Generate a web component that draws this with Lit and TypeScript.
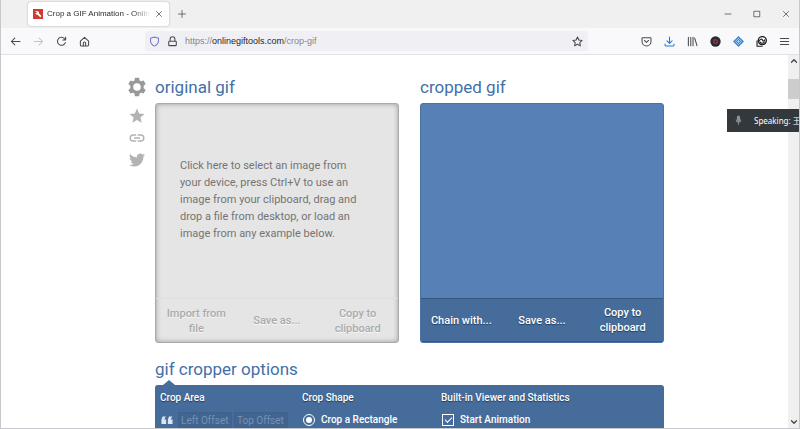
import { LitElement, html, css, svg } from "lit";
import { customElement, property } from "lit/decorators.js";

const stroke = (body: unknown, cls = "") => html`<svg class="ic ${cls}" viewBox="0 0 16 16" fill="none" stroke="currentColor" stroke-width="1.5" stroke-linecap="round" stroke-linejoin="round" aria-hidden="true">${body}</svg>`;
const solid = (body: unknown, cls = "") => html`<svg class="ic ${cls}" viewBox="0 0 24 24" fill="currentColor" aria-hidden="true">${body}</svg>`;

const icons = {
  back: stroke(svg`<path d="M14.5 8H2M7 3L2 8l5 5"/>`),
  forward: stroke(svg`<path d="M1.500 8H14M9 3l5 5-5 5"/>`),
  reload: stroke(svg`<path d="M13.500 9.500a5.800 5.800 0 1 1-1.200-5.600l1.500 1.600M14 1.500v4.200H9.800"/>`),
  home: stroke(svg`<path d="M2 7.500L8 2l6 5.500V13a1.500 1.500 0 0 1-1.500 1.500h-9A1.500 1.500 0 0 1 2 13zM6.300 14v-3.500a1.700 1.700 0 0 1 3.400 0V14"/>`),
  shield: stroke(svg`<path d="M8 1.300l5.800 1.900v3.300c0 4-2.300 6.600-5.800 8.200-3.500-1.600-5.800-4.200-5.800-8.200V3.200z"/>`),
  lock: stroke(svg`<path d="M4.500 7V4.500a3.500 3.500 0 0 1 7 0V7M3.500 7.500h9a1 1 0 0 1 1 1V13a1 1 0 0 1-1 1h-9a1 1 0 0 1-1-1V8.500a1 1 0 0 1 1-1z"/>`),
  star: stroke(svg`<path d="M8 1.500l2 4.300 4.700.6-3.400 3.200.9 4.700L8 12l-4.200 2.300.9-4.700L1.300 6.400 6 5.800z"/>`),
  pocket: stroke(svg`<path d="M2.500 2.500h11a1 1 0 0 1 1 1V8a6.500 6.500 0 0 1-13 0V3.500a1 1 0 0 1 1-1zM5 6.500L8 9.300l3-2.800"/>`),
  download: stroke(svg`<path d="M8 1.500v9M4.200 7L8 10.700 11.800 7M1.500 11.500V13A1.500 1.500 0 0 0 3 14.500h10a1.500 1.500 0 0 0 1.500-1.500v-1.500"/>`),
  library: stroke(svg`<path d="M2 2v12M5.500 2v12M8.800 2v12M11.200 3l3.300 11"/>`),
  menu: stroke(svg`<path d="M2 3.500h12M2 8h12M2 12.500h12"/>`),
  close: stroke(svg`<path d="M3 3l10 10M13 3L3 13"/>`),
  plus: stroke(svg`<path d="M8 1v14M1 8h14"/>`),
  min: stroke(svg`<path d="M2 8h12"/>`),
  max: stroke(svg`<path d="M2.500 2.500h11v11h-11z"/>`),
  up: stroke(svg`<path d="M3 10.500L8 5.500l5 5" stroke-width="2.500"/>`),
  down: stroke(svg`<path d="M3 5.500l5 5 5-5" stroke-width="2.500"/>`),
  record: html`<svg class="ic" viewBox="0 0 16 16" aria-hidden="true"><circle cx="8" cy="8" r="7.500" fill="#2c2830"/><circle cx="8" cy="8" r="4" fill="#7c3348"/><circle cx="8" cy="8" r="1.500" fill="#42262f"/></svg>`,
  diamond: html`<svg class="ic" viewBox="0 0 16 16" aria-hidden="true"><path d="M8 0l8 8-8 8-8-8z" fill="#3f87cf"/><path d="M8 3.500L12.500 8 8 12.500 3.500 8zM8 6v4M6 8h4" fill="none" stroke="#d3e6f7" stroke-width="1"/></svg>`,
  chat: html`<svg class="ic" viewBox="0 0 16 16" aria-hidden="true"><circle cx="9.200" cy="6.700" r="5.800" fill="#fff" stroke="#1c1b1f" stroke-width="2"/><path d="M1.500 6.500v8.300h8" fill="none" stroke="#1c1b1f" stroke-width="1.600"/><path d="M5 7.500c0-3 4-4 4.500-1.500s3 1 3.500-1M5.500 8.500c1.500 3 6 2.500 7-.5" fill="none" stroke="#1c1b1f" stroke-width="1.600"/></svg>`,
  tool: html`<svg class="ic favicon" viewBox="0 0 20 20" aria-hidden="true"><path d="M0 0h20v20H0z" fill="#cf3a33"/><path d="M4 4h4l4 2v3l5 5-2.500 2.500-5-5H7L4 8l3 .5L8 7z" fill="#fff"/></svg>`,
  gear: solid(svg`<path fill-rule="evenodd" d="M9.500 1h5l.6 3.100 1.800 1.100 3-1.100 2.500 4.300-2.400 2.100v2.900l2.400 2.100-2.500 4.400-3-1.100-1.800 1.100-.6 3.100h-5l-.6-3.100-1.800-1.100-3 1.100-2.500-4.400L4 13.400v-2.900L1.600 8.400l2.500-4.300 3 1.100 1.800-1.100zM12 7.500a4.500 4.500 0 1 0 0 9 4.500 4.500 0 0 0 0-9z"/>`, "gear"),
  favourite: solid(svg`<path d="M12 17.300L18.200 21l-1.600-7L22 9.200l-7.200-.6L12 2 9.200 8.600 2 9.200 7.500 14l-1.700 7z"/>`, "side"),
  link: solid(svg`<path d="M3.900 12a3.100 3.100 0 0 1 3.100-3.100h4V7H7a5 5 0 0 0 0 10h4v-1.900H7A3.100 3.100 0 0 1 3.900 12zM8 13h8v-2H8zm9-6h-4v1.900h4a3.100 3.100 0 0 1 0 6.200h-4V17h4a5 5 0 0 0 0-10z"/>`, "side"),
  twitter: solid(svg`<path d="M23.950 4.570a10 10 0 0 1-2.820.78 4.960 4.960 0 0 0 2.160-2.720c-.95.550-2 .950-3.130 1.180a4.920 4.920 0 0 0-8.380 4.480C7.690 8.090 4.070 6.130 1.640 3.160a4.820 4.820 0 0 0-.67 2.480c0 1.710.87 3.210 2.190 4.100a4.900 4.900 0 0 1-2.230-.62v.06a4.920 4.920 0 0 0 3.950 4.830 5 5 0 0 1-2.210.08 4.940 4.940 0 0 0 4.600 3.420A9.870 9.870 0 0 1 0 19.540a13.990 13.990 0 0 0 7.550 2.210c9.050 0 14-7.500 14-13.980 0-.210 0-.420-.02-.630a9.940 9.940 0 0 0 2.460-2.550z"/>`, "bird"),
  quote: solid(svg`<path d="M3 18h5.500l2-5V5h-8v8h3.300zm11 0h5.500l2-5V5h-8v8h3.300z" transform="rotate(180 12 12)"/>`, "quote"),
  mic: solid(svg`<path d="M12 14a3.500 3.500 0 0 0 3.500-3.500v-6a3.500 3.500 0 0 0-7 0v6A3.500 3.500 0 0 0 12 14zm6.500-4h-2a4.500 4.500 0 0 1-9 0h-2a6.500 6.500 0 0 0 5.500 6.400V21h2v-4.600a6.500 6.500 0 0 0 5.500-6.400z"/>`, "mic"),
};

const reset = css`
  :host, *, *::before { box-sizing: border-box; }
  button { border: 0; padding: 0; background: none; font: inherit; color: inherit; display: flex; align-items: center; justify-content: center; }
  .ic { display: block; width: 12px; height: 12px; flex: none; }
`;

@customElement("browser-chrome")
class BrowserChrome extends LitElement {
  static styles = [reset, css`
    :host { display: block; flex: none; font: 9px/16px "Liberation Sans", sans-serif; color: #48474e; }
    .tabs { display: flex; align-items: center; height: 28px; padding: 0 9px 0 27px; background: #f0f0f0; }
    .tab { display: flex; align-items: center; gap: 4px; width: 141px; height: 24px; padding: 0 6px 0 5px; background: #fff; border-radius: 3px; box-shadow: 0 0 2px #a9a9ae; }
    .tab .favicon { width: 10px; height: 10px; }
    .title { flex: 1; font-size: 8px; overflow: hidden; white-space: nowrap; color: #2c2b31; mask-image: linear-gradient(90deg, #000 82%, transparent); }
    .tab .close .ic, .add .ic, .window .ic { width: 8px; height: 8px; }
    .add { margin-left: 9px; }
    .window { display: flex; gap: 21px; margin-left: auto; }
    .bar { display: flex; align-items: center; height: 27px; padding: 0 9px; background: #f9f9fb; border-bottom: 1px solid #e2e2e6; }
    .nav { display: flex; gap: 12px; width: 135px; }
    .off { color: #c4c4c9; }
    .url { display: flex; align-items: center; gap: 7px; flex: 1; height: 20px; padding: 0 5px 0 4px; background: #f0f0f4; border-radius: 3px; }
    .url a { flex: 1; color: #85858c; text-decoration: none; }
    .url b { font-weight: 400; color: #26252b; }
    .shield { color: #7476bd; }
    .tools { display: flex; gap: 12px; margin-left: 53px; }
    .tools .down { color: #2f74d0; }
    .tools .ic, .nav .ic, .url .ic { width: 11px; height: 11px; }
  `];
  render() {
    return html`
      <div class="tabs">
        <div class="tab">${icons.tool}<span class="title">Crop a GIF Animation - Online GIF Tools</span><button class="close" aria-label="Close tab">${icons.close}</button></div>
        <button class="add" aria-label="New tab">${icons.plus}</button>
        <div class="window"><button aria-label="Minimize">${icons.min}</button><button aria-label="Maximize">${icons.max}</button><button aria-label="Close">${icons.close}</button></div>
      </div>
      <div class="bar">
        <div class="nav"><button aria-label="Back">${icons.back}</button><button class="off" aria-label="Forward">${icons.forward}</button><button aria-label="Reload">${icons.reload}</button><button aria-label="Home">${icons.home}</button></div>
        <div class="url"><span class="shield">${icons.shield}</span>${icons.lock}<a href="#">https://<b>onlinegiftools.com</b>/crop-gif</a><button aria-label="Bookmark">${icons.star}</button></div>
        <div class="tools"><button aria-label="Pocket">${icons.pocket}</button><button class="down" aria-label="Downloads">${icons.download}</button><button aria-label="Library">${icons.library}</button><button aria-label="Recorder">${icons.record}</button><button aria-label="Extension">${icons.diamond}</button><button aria-label="Chat">${icons.chat}</button><button aria-label="Menu">${icons.menu}</button></div>
      </div>`;
  }
}

@customElement("gif-panel")
class GifPanel extends LitElement {
  @property() heading = "";
  @property() message = "";
  @property({ type: Array }) actions: string[] = [];
  @property({ type: Boolean, reflect: true }) filled = false;
  static styles = [reset, css`
    :host { display: block; }
    h2 { margin: 0 0 4px; font: 400 17px/24px Roboto, sans-serif; color: #4270a8; white-space: nowrap; }
    .card { display: flex; flex-direction: column; height: 240px; border-radius: 3px; background: #e5e5e5; color: #747474; box-shadow: inset 0 0 5px #999; border: 1px solid #aaa; overflow: hidden; }
    .drop { flex: 1; padding: 0 32px 4px 24px; font-size: 11px; line-height: 17px; text-align: left; justify-content: flex-start; }
    .actions { display: grid; grid-template-columns: repeat(3, 1fr); height: 44px; border-top: 1px solid #e0e0e0; color: #aaa; font-size: 11px; line-height: 15px; font-weight: 500; }
    .actions button { padding: 0 6px; text-shadow: 0 1px #f8f8f8; }
    .actions button:first-child, .actions button:last-child { padding: 0 8px; }
    :host([filled]) .card { background: #5781b6; border-color: #4b72a4; box-shadow: none; }
    :host([filled]) .actions { background: #466c9b; border-top: 1px solid #36587f; border-bottom: 1px solid #36587f; color: #fff; }
    :host([filled]) .actions button { padding: 0 6px; text-shadow: 0 1px 1px #213c5d; }
  `];
  render() {
    return html`<h2>${this.heading}</h2>
      <div class="card"><button class="drop" aria-label=${this.message || "Result"}>${this.message}</button>
        <div class="actions">${this.actions.map(a => html`<button>${a}</button>`)}</div></div>`;
  }
}

@customElement("crop-options")
class CropOptions extends LitElement {
  static styles = [reset, css`
    :host { display: block; color: #fff; }
    h2 { margin: 0 0 4px; font: 400 17px/24px Roboto, sans-serif; color: #4270a8; }
    .box { position: relative; display: grid; grid-template-columns: 142px 139px 1fr; height: 90px; padding: 5px; background: #466c9b; border-radius: 3px; font-size: 10px; line-height: 16px; font-weight: 500; }
    .box::before { content: ""; position: absolute; left: 8px; top: -5px; border: 6px solid transparent; border-top: 0; border-bottom: 5px solid #466c9b; }
    h3 { margin: 0 0 6px; font-size: 10px; line-height: 16px; font-weight: 500; text-shadow: 0 1px 1px #213c5d; }
    .row { display: flex; align-items: center; gap: 6px; height: 16px; }
    .fields { gap: 2px; }
    .quote { width: 14px; height: 14px; margin-right: 2px; color: #dce5f0; }
    input[type=text] { width: 54px; height: 16px; padding: 0 2px; border: 1px solid #3e628f; border-radius: 1px; background: #41658f; font: 400 10px/14px Roboto, sans-serif; }
    input::placeholder { color: #7592b6; opacity: 1; }
    input[type=radio], input[type=checkbox] { appearance: none; margin: 0 0 0 1px; width: 12px; height: 12px; border: 1px solid #fff; display: grid; place-items: center; flex: none; }
    input[type=radio] { border-radius: 50%; }
    input[type=radio]::before { content: ""; width: 6px; height: 6px; border-radius: 50%; background: #fff; }
    input[type=checkbox]::before { content: ""; width: 7px; height: 4px; border: solid #fff; border-width: 0 0 1px 1px; transform: rotate(-45deg); margin-bottom: 2px; }
  `];
  render() {
    return html`<h2>gif cropper options</h2>
      <div class="box">
        <section><h3>Crop Area</h3><div class="row fields">${icons.quote}<input type="text" aria-label="Left Offset" placeholder="Left Offset"><input type="text" aria-label="Top Offset" placeholder="Top Offset"></div></section>
        <section><h3>Crop Shape</h3><label class="row"><input type="radio" name="shape" checked>Crop a Rectangle</label></section>
        <section><h3>Built-in Viewer and Statistics</h3><label class="row"><input type="checkbox" checked>Start Animation</label></section>
      </div>`;
  }
}

@customElement("app-root")
class AppRoot extends LitElement {
  static styles = [reset, css`
    :host { position: relative; display: flex; flex-direction: column; height: 100vh; overflow: hidden; background: #fff; border-left: 1px solid #c8c8cc; border-right: 1px solid #c8c8cc; border-bottom: 1px solid #c8c8cc; font-family: Roboto, sans-serif; }
    .view { flex: 1; display: flex; min-height: 0; }
    main { flex: 1; display: grid; grid-template-columns: 19px 509px; gap: 9px; justify-content: center; align-items: start; padding: 20px 0 0 2px; overflow: hidden; }
    .side-tools { display: flex; flex-direction: column; align-items: center; color: #b3b3b3; gap: 4px; padding-top: 2px; }
    .gear { width: 20px; height: 20px; color: #999; }
    .first { margin-bottom: 6px; }
    .side { width: 18px; height: 18px; }
    .bird { width: 16px; height: 18px; }
    .content { display: flex; flex-direction: column; gap: 14px; }
    .panels { display: grid; grid-template-columns: 1fr 1fr; gap: 21px; }
    .scroll { display: flex; flex-direction: column; align-items: center; width: 11px; background: #f0f0f0; color: #444; }
    .scroll .ic { width: 8px; height: 8px; }
    .scroll button { width: 100%; height: 12px; }
    .thumb { width: 11px; height: 20px; margin-top: 12px; background: #cdcdcd; }
    .end { margin-top: auto; }
    .speaking { position: absolute; right: 0; top: 109px; display: flex; align-items: center; gap: 10px; width: 72px; height: 23px; padding-left: 6px; background: #33383d; color: #fff; font: 8px/23px "Noto Sans", "Noto Sans CJK SC", sans-serif; white-space: nowrap; overflow: hidden; }
    .mic { width: 11px; height: 11px; color: #8e9296; }
  `];
  render() {
    return html`
      <browser-chrome></browser-chrome>
      <div class="view">
        <main>
          <div class="side-tools"><button class="first" aria-label="Settings">${icons.gear}</button><button aria-label="Favourite">${icons.favourite}</button><button aria-label="Link">${icons.link}</button><button aria-label="Twitter">${icons.twitter}</button></div>
          <div class="content">
            <div class="panels">
              <gif-panel heading="original gif" message="Click here to select an image from your device, press Ctrl+V to use an image from your clipboard, drag and drop a file from desktop, or load an image from any example below." .actions=${["Import from file", "Save as...", "Copy to clipboard"]}></gif-panel>
              <gif-panel filled heading="cropped gif" .actions=${["Chain with...", "Save as...", "Copy to clipboard"]}></gif-panel>
            </div>
            <crop-options></crop-options>
          </div>
        </main>
        <div class="scroll"><button aria-label="Scroll up">${icons.up}</button><div class="thumb"></div><button class="end" aria-label="Scroll down">${icons.down}</button></div>
      </div>
      <div class="speaking">${icons.mic}<span>Speaking: 王</span></div>`;
  }
}
